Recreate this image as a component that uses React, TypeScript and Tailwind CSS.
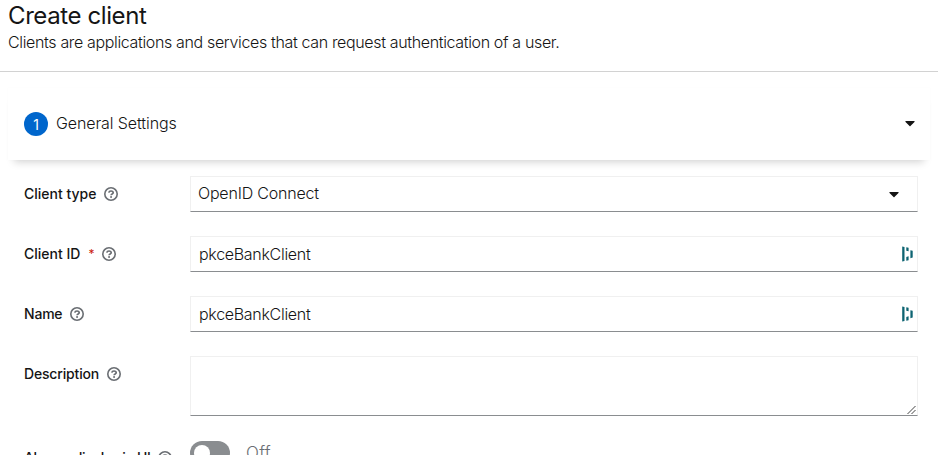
import type { ReactNode } from "react";
import { FaCaretDown } from "react-icons/fa";

function HelpIcon() {
  return (
    <svg className="ml-2 size-[14px] shrink-0 text-[#6a6e73]" viewBox="0 0 14 14" fill="none" stroke="currentColor">
      <circle cx="7" cy="7" r="6.2" strokeWidth="1.6" />
      <path d="M4.8 5.6C5 4.500 5.900 4 7 4c1.200 0 2.200.6 2.200 1.700 0 1.300-2.100 1.200-2.100 2.500" strokeWidth="1.7" />
      <circle cx="7.05" cy="10" r="1" fill="currentColor" stroke="none" />
    </svg>
  );
}

function Label({ text, required, tracking }: { text: string; required?: boolean; tracking: string }) {
  return (
    <div className="flex h-9 w-[166px] shrink-0 items-center whitespace-nowrap">
      <span className={`-mt-0.5 text-[14px] font-medium ${tracking}`}>{text}</span>
      {required && <span className="ml-2 w-[6px] text-[12px] leading-none text-[#c9190b]">*</span>}
      <HelpIcon />
    </div>
  );
}

function Row({ label, children }: { label: ReactNode; children: ReactNode }) {
  return (
    <div className="flex items-start">
      {label}
      {children}
    </div>
  );
}

const field =
  "w-[728px] border border-[#f0f0f0] border-b-[#8a8d90] bg-white text-[16px] font-light";

function ManagerMark() {
  return (
    <svg width="12" height="16" viewBox="0 0 12 16" fill="#0e6472">
      <path d="M0.200 0.400 2.500 1v13.900L0.200 15.400zM4.300 1.200 6.600 1.800v3.500l-2.300-.6zM4.300 10.900 6.600 10.300v3.900l-2.300.6zM8.400 4.200l2.300.6v6.800l-2.300.6z" />
    </svg>
  );
}

function TextField({ value }: { value: string }) {
  return (
    <div className={`${field} flex h-9 items-center justify-between pl-2 pr-[3px]`}>
      <span className="tracking-[-0.3px]">{value}</span>
      <ManagerMark />
    </div>
  );
}

export default function App() {
  return (
    <div className="h-[455px] w-[938px] overflow-hidden bg-white font-[Inter,sans-serif] text-[#151515]">
      <header className="h-[72px] border-b border-[#d2d2d2] pl-2">
        <h1 className="text-[24px] leading-[31px] tracking-[-0.4px]">Create client</h1>
        <p className="-mt-px text-[16px] font-light leading-[24px] tracking-[-0.35px]">
          Clients are applications and services that can request authentication of a user.
        </p>
      </header>
      <section className="ml-2 mt-4 flex h-[72px] w-[922px] items-center bg-white pl-4 pr-3 shadow-[0_8px_8px_-6px_rgba(3,3,3,0.18),0_0_1px_rgba(3,3,3,0.04)]">
        <span className="flex size-6 items-center justify-center rounded-full bg-[#06c] text-[14px] text-white">1</span>
        <span className="-mt-0.5 ml-2 text-[16px] font-light tracking-[-0.1px]">General Settings</span>
        <FaCaretDown className="-mt-0.5 ml-auto size-4" />
      </section>
      <form className="flex flex-col gap-6 pl-6 pt-4">
        <Row label={<Label text="Client type" tracking="tracking-[0px]" />}>
          <div className={`${field} flex h-9 items-center pl-[7px] pr-[15px]`}>
            <span className="-mt-0.5 tracking-[-0.2px]">OpenID Connect</span>
            <FaCaretDown className="-mt-px ml-auto size-4" />
          </div>
        </Row>
        <Row label={<Label text="Client ID" required tracking="tracking-[0px]" />}>
          <TextField value="pkceBankClient" />
        </Row>
        <Row label={<Label text="Name" tracking="tracking-[-0.2px]" />}>
          <TextField value="pkceBankClient" />
        </Row>
        <Row label={<Label text="Description" tracking="tracking-[-0.17px]" />}>
          <div className={`${field} flex h-[60px] items-end justify-end pr-px`}>
            <svg width="10" height="10" viewBox="0 0 10 10" stroke="#444" strokeWidth="1">
              <path d="M1.500 9 9.500 1M5.500 9 9.500 5" />
            </svg>
          </div>
        </Row>
        <Row label={<Label text="Always display in UI" tracking="tracking-[-0.35px]" />}>
          <div className="mt-px flex h-6 w-10 items-center rounded-full bg-[#8a8d90] pl-1">
            <span className="size-4 rounded-full bg-white" />
          </div>
          <span className="ml-4 mt-px text-[17px] font-light leading-6 tracking-[0.3px] text-[#6a6e73]">Off</span>
        </Row>
      </form>
    </div>
  );
}
